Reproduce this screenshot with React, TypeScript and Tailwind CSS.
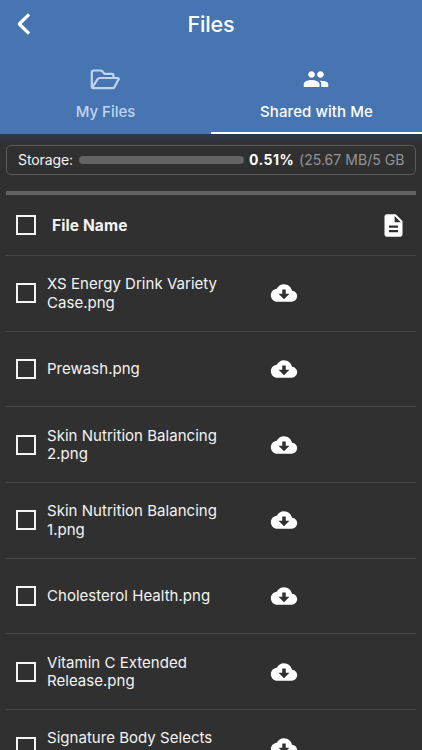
import { useState } from "react";
import { IoMdCloudDownload, IoMdPeople } from "react-icons/io";
import { MdDescription } from "react-icons/md";

const files = [
  { id: 1, lines: ["XS Energy Drink Variety", "Case.png"] },
  { id: 2, lines: ["Prewash.png"] },
  { id: 3, lines: ["Skin Nutrition Balancing", "2.png"] },
  { id: 4, lines: ["Skin Nutrition Balancing", "1.png"] },
  { id: 5, lines: ["Cholesterol Health.png"] },
  { id: 6, lines: ["Vitamin C Extended", "Release.png"] },
  { id: 7, lines: ["Signature Body Selects", ""] },
];

const Checkbox = ({ checked, onClick, label }: { checked: boolean; onClick: () => void; label: string }) => (
  <button
    type="button"
    role="checkbox"
    aria-checked={checked}
    aria-label={label}
    onClick={onClick}
    className={`ml-2.5 h-5 w-5 shrink-0 border-2 border-[#f4f4f4] ${checked ? "bg-[#4675b1]" : ""}`}
  />
);

const App = () => {
  const [tab, setTab] = useState("shared");
  const [selected, setSelected] = useState<number[]>([]);

  const toggle = (id: number) => {
    setSelected((prev) => (prev.includes(id) ? prev.filter((item) => item !== id) : [...prev, id]));
  };

  const toggleAll = () => {
    setSelected((prev) => (prev.length === files.length ? [] : files.map((file) => file.id)));
  };

  return (
    <div className="flex h-[750px] w-full flex-col overflow-hidden bg-[#303030] font-['Inter',sans-serif] text-[#f4f4f4]">
      <header className="h-[134px] shrink-0 bg-[#4675b1]">
        <div className="grid h-12 grid-cols-[48px_1fr_48px] items-center">
          <button type="button" aria-label="Back" className="flex justify-center">
            <svg width="14" height="22" viewBox="0 0 14 22" fill="none" stroke="white" strokeWidth="3.2">
              <path d="M12 1.300 2.300 11l9.700 9.700" strokeLinejoin="round" />
            </svg>
          </button>
          <h1 className="text-center text-[21.500px] font-medium tracking-[-0.1px] text-white">Files</h1>
        </div>
        <nav className="grid h-[86px] grid-cols-2 text-[15px] font-medium">
          <button
            type="button"
            onClick={() => setTab("mine")}
            className={`flex flex-col items-center border-b-2 ${tab === "mine" ? "border-white text-white" : "border-transparent text-[#c1d4ef]"}`}
          >
            <span className="flex h-[62px] items-center pr-px">
              <svg width="30" height="21" viewBox="0 0 30 21" fill="none" stroke="currentColor" strokeWidth="2.2" strokeLinejoin="round">
                <path d="M23.500 9V6.700a1.800 1.800 0 0 0-1.800-1.800h-7.200L12.300 2.300A2.300 2.300 0 0 0 10.600 1.500H3.500a1.700 1.700 0 0 0-1.700 1.700v14.300a1.700 1.700 0 0 0 1.700 1.700h18.900a2.500 2.500 0 0 0 2.100-1.100L28.500 10.600c.6-.9.2-1.600-.8-1.600H9.800a2.500 2.500 0 0 0-2.200 1.200L2.300 18.300" />
              </svg>
            </span>
            <span className="leading-[3px]">My Files</span>
          </button>
          <button
            type="button"
            onClick={() => setTab("shared")}
            className={`flex flex-col items-center border-b-2 ${tab === "shared" ? "border-white text-white" : "border-transparent text-[#c1d4ef]"}`}
          >
            <span className="flex h-[62px] items-center pr-px">
              <IoMdPeople size={28} />
            </span>
            <span className="leading-[3px] tracking-[0.08px]">Shared with Me</span>
          </button>
        </nav>
      </header>

      <main className="bg-linear-to-b from-[#2f3947] to-[#303030] to-[12px] px-1.5 pt-[11px]">
        <section className="flex h-[30px] items-center rounded-[5px] border border-[#5c5c5c] pb-px pl-[11px] text-[14px] whitespace-nowrap">
          <span className="w-[56px] tracking-[-0.1px]">Storage:</span>
          <div className="ml-[5px] h-2 w-[165px] rounded-full bg-[#646464]" />
          <strong className="ml-[5px] w-[45px] font-bold tracking-[0.45px] text-white">0.51%</strong>
          <span className="ml-[5px] tracking-[0.04px] text-[#949494]">(25.67 MB/5 GB</span>
        </section>

        <section className="mt-4 border-t-4 border-[#626262]">
          <div className="flex h-[61px] items-center border-b border-[#484848]">
            <Checkbox checked={selected.length === files.length} onClick={toggleAll} label="Select all" />
            <h2 className="ml-4 pt-px text-[15.500px] font-bold tracking-[0.1px]">File Name</h2>
            <MdDescription size={27} className="mr-[9px] ml-auto text-white" />
          </div>

          {files.map((file) => (
            <div key={file.id} className="flex h-[75.650px] items-center border-b border-[#484848]">
              <Checkbox checked={selected.includes(file.id)} onClick={() => toggle(file.id)} label={file.lines.join(" ")} />
              <p className="ml-[11px] w-[218px] pt-px text-[15px] leading-[18.500px] tracking-[0.03px]">
                {file.lines.map((line) => (
                  <span key={line} className="block min-h-[18.500px]">{line}</span>
                ))}
              </p>
              <button type="button" aria-label="Download" className="ml-[5px] text-white">
                <IoMdCloudDownload size={28} />
              </button>
            </div>
          ))}
        </section>
      </main>
    </div>
  );
};

export default App;
